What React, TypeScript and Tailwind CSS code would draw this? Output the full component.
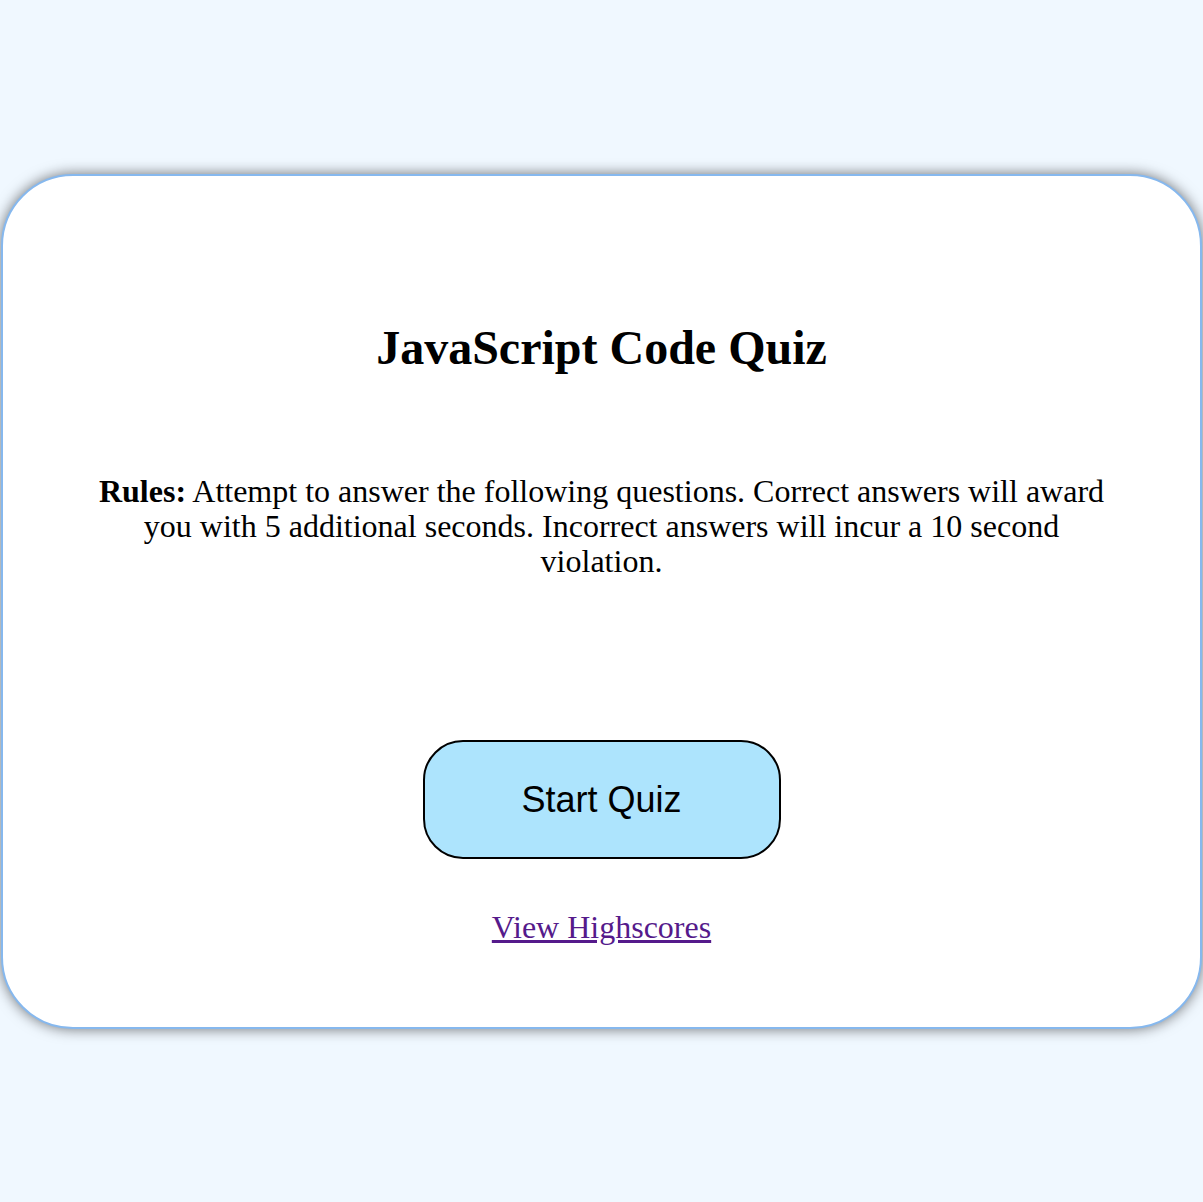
export default function App() {
  return (
    <div className="min-h-[1202px] bg-[#f0f8ff] pt-[174px] px-[1px]" style={{ fontFamily: '"Liberation Serif", "Times New Roman", serif' }}>
      <div className="h-[855px] rounded-[72px] border-2 border-[#86b8ee] bg-white shadow-[0_0_14px_rgba(0,0,0,0.55)] flex flex-col items-center">
        <h1 className="mt-[144px] text-[48px] font-bold leading-[56px] text-black">JavaScript Code Quiz</h1>
        <p className="mt-[98px] px-[80px] text-center text-[32px] leading-[35px] text-black">
          <strong>Rules:</strong> Attempt to answer the following questions. Correct answers will award you with 5 additional seconds. Incorrect answers will incur a 10 second violation.
        </p>
        <button className="mt-[161px] h-[119px] w-[358px] rounded-[40px] border-2 border-black bg-[#ade4fd] text-[36px] text-black" style={{ fontFamily: '"Liberation Sans", Arial, sans-serif' }}>
          Start Quiz
        </button>
        <a href="#" className="mt-[51px] text-[32px] leading-[35px] text-[#551a8b] underline">View Highscores</a>
      </div>
    </div>
  );
}
